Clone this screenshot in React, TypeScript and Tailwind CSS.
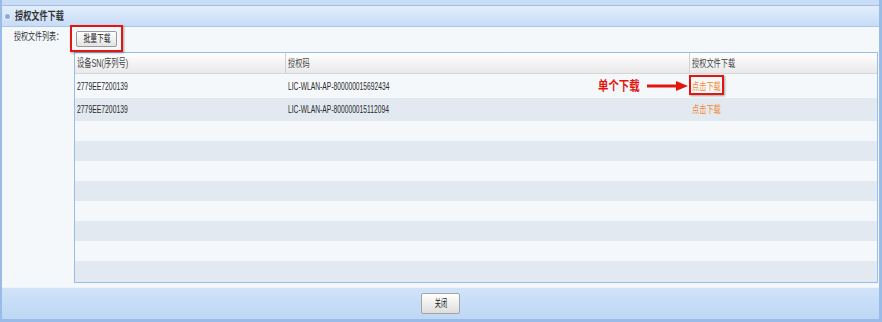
import React from 'react';

const FONT = 'font-["Liberation_Sans","Noto_Sans_CJK_SC",sans-serif]';

// the screenshot text is heavily condensed, so each run is squeezed horizontally
const T: React.FC<{ className?: string; center?: boolean; children: React.ReactNode }> = ({ className = '', center, children }) => (
  <span className={`inline-block whitespace-nowrap ${center ? 'origin-center' : 'origin-left'} ${className}`}>{children}</span>
);

const rows = [
  { sn: '2779EE7200139', code: 'LIC-WLAN-AP-800000015692434' },
  { sn: '2779EE7200139', code: 'LIC-WLAN-AP-800000015112094' },
];

const emptyRows = [0, 1, 2, 3, 4, 5, 6, 7];

export default function App() {
  return (
    <div className={`relative w-[882px] h-[322px] overflow-hidden ${FONT}`}>
      <div className="h-full flex flex-col border-l-2 border-r-[3px] border-b-[3px] border-[#99bbe8] bg-[#f5f8fb]">
        <div className="h-[6px] shrink-0 bg-[#c9ddf6] border-b border-[#9fbfe8]" />

        {/* Panel title */}
        <div className="h-[21px] shrink-0 flex items-center gap-[5px] pl-[3px] bg-gradient-to-b from-[#e2eefc] to-[#c8dcf6] border-b border-[#a9c6ec]">
          <span className="w-[5px] h-[5px] rounded-full bg-[#86aadb] ring-1 ring-[#e9f2fd]" />
          <T className="text-[11px] font-bold text-[#333] scale-x-[0.74]">授权文件下载</T>
        </div>

        {/* Body */}
        <div className="flex-1 flex">
          <div className="w-[72px] shrink-0 pl-3 pt-[3px] flex items-start">
            <T className="text-[10px] leading-[14px] text-[#333] scale-x-[0.7]">授权文件列表：</T>
          </div>
          <div className="flex-1 flex flex-col pr-px">
            <div className="h-[25px] pt-[4px] pl-[2px]">
              <button className="w-[41px] h-[16px] flex items-center justify-center border border-[#9a9a9a] rounded-[2px] bg-gradient-to-b from-white to-[#e3e3e3]">
                <T center className="text-[10px] leading-none text-[#222] scale-x-[0.68]">批量下载</T>
              </button>
            </div>

            <div className="h-[231px] border border-[#99bbe8] bg-[#f5f8fa] flex flex-col">
              <div className="h-[21px] shrink-0 grid grid-cols-[211px_404px_1fr] bg-gradient-to-b from-white to-[#e9e9e9] border-b border-[#d6d6d6] text-[#444]">
                <div className="flex items-center pl-[2px] border-r border-[#d0d0d0]">
                  <T className="text-[11px] scale-x-[0.66]">设备SN(序列号)</T>
                </div>
                <div className="flex items-center pl-[2px] border-r border-[#d0d0d0]">
                  <T className="text-[10px] scale-x-[0.72]">授权码</T>
                </div>
                <div className="flex items-center pl-[2px]">
                  <T className="text-[10px] scale-x-[0.72]">授权文件下载</T>
                </div>
              </div>

              {rows.map((r, i) => (
                <div
                  key={i}
                  className={`shrink-0 grid grid-cols-[211px_404px_1fr] items-center text-[#2a2a2a] ${i === 0 ? 'h-[24px] bg-[#f5f8fa]' : 'h-[23px] bg-[#e3e9f1]'}`}
                >
                  <div className="pl-[2px] flex"><T className="text-[11px] scale-x-[0.62]">{r.sn}</T></div>
                  <div className="pl-[2px] flex"><T className="text-[11px] scale-x-[0.61]">{r.code}</T></div>
                  <div className="pl-[2px] flex"><T className="text-[10px] text-[#f5862a] scale-x-[0.72]">点击下载</T></div>
                </div>
              ))}

              {emptyRows.map((i) => (
                <div key={i} className={`shrink-0 ${i === 7 ? 'h-[21px]' : 'h-[20px]'} ${i % 2 === 0 ? 'bg-[#f5f8fa]' : 'bg-[#e3e9f1]'}`} />
              ))}
            </div>
          </div>
        </div>

        {/* Footer */}
        <div className="h-[32px] shrink-0 flex justify-center pt-[5px] border-t border-[#e9f2fd] bg-gradient-to-b from-[#d0e3f9] to-[#bdd7f4]">
          <button className="w-[39px] h-[21px] flex items-center justify-center border border-[#a3a3a3] rounded-[2px] bg-gradient-to-b from-white to-[#dedede]">
            <T center className="text-[10px] leading-none text-[#222] scale-x-[0.62]">关闭</T>
          </button>
        </div>
      </div>

      {/* Annotations */}
      <div className="absolute left-[70px] top-[25px] w-[53px] h-[27px] border-2 border-[#e3160f] shadow-[1px_1px_2px_rgba(0,0,0,0.35)]" />
      <div className="absolute left-[689px] top-[75px] w-[35px] h-[20px] border-2 border-[#e3160f] shadow-[1px_1px_2px_rgba(0,0,0,0.35)]" />
      <div className="absolute left-[598px] top-[77px] h-[18px] flex items-center">
        <T className="text-[13px] font-bold text-[#e3160f] scale-x-[0.8]">单个下载</T>
      </div>
      <svg className="absolute left-[646px] top-[80px]" width="43" height="12" viewBox="0 0 43 12">
        <line x1="1" y1="6" x2="32" y2="6" stroke="#e3160f" strokeWidth="3" />
        <polygon points="30,1 42,6 30,11" fill="#e3160f" />
      </svg>
    </div>
  );
}
